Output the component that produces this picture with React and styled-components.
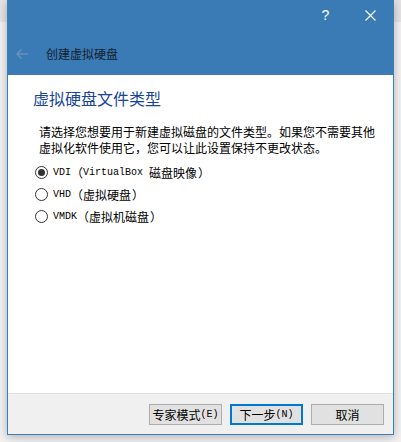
import React from "react";
import styled, { createGlobalStyle } from "styled-components";

const Global = createGlobalStyle`
  html, body { margin: 0; padding: 0; }
  body {
    background: #ececec;
    width: 401px;
    height: 442px;
    overflow: hidden;
    font-family: "Noto Sans CJK SC", "DejaVu Sans", sans-serif;
  }
`;

const Screen = styled.div`
  width: 401px;
  height: 442px;
  display: flex;
  background: linear-gradient(to bottom, #e4e4e4 0, #e4e4e4 22px, #f2f2f2 22px);
`;

const Window = styled.div`
  margin-left: 7px;
  width: 387px;
  height: 435px;
  box-sizing: border-box;
  border: 1px solid #3d7dbb;
  border-top: none;
  display: flex;
  flex-direction: column;
  background: #fff;
  box-shadow: 0 2px 9px rgba(0, 0, 0, 0.28);
`;

const TitleBar = styled.div`
  height: 75px;
  background: #3a7bb6;
  display: flex;
  flex-direction: column;
`;

const Controls = styled.div`
  height: 30px;
  display: flex;
  justify-content: flex-end;
`;

const CtrlButton = styled.div`
  width: 45px;
  height: 30px;
  display: flex;
  align-items: center;
  justify-content: center;
  color: #fff;
  font-family: "Liberation Sans", sans-serif;
  font-size: 14px;
`;

const TitleRow = styled.div`
  margin-top: 14px;
  height: 20px;
  display: flex;
  align-items: center;
  padding-left: 7px;
`;

const Title = styled.div`
  margin-left: 17px;
  font-size: 12px;
  line-height: 20px;
  color: #15202c;
`;

const Content = styled.div`
  height: 318px;
  box-sizing: border-box;
  padding: 13px 0 0 25px;
  display: flex;
  flex-direction: column;
`;

const Heading = styled.div`
  font-size: 16px;
  line-height: 20px;
  color: #17459a;
`;

const Description = styled.div`
  margin-top: 16px;
  padding-left: 6px;
  width: 340px;
  font-size: 12px;
  line-height: 16px;
  color: #000;
`;

const Options = styled.div`
  margin-top: 9px;
  padding-left: 2px;
  display: flex;
  flex-direction: column;
  gap: 8px;
`;

const Option = styled.label`
  display: flex;
  align-items: center;
  height: 14px;
  font-size: 12px;
  color: #000;
  white-space: pre;
`;

const Radio = styled.span`
  width: 13px;
  height: 13px;
  box-sizing: border-box;
  border-radius: 50%;
  border: 1px solid #333;
  background: #fff;
  margin-right: 5px;
  display: flex;
  align-items: center;
  justify-content: center;
  &::after {
    content: "";
    width: 7px;
    height: 7px;
    border-radius: 50%;
    background: ${(p) => (p.$checked ? "#333" : "transparent")};
  }
`;

const Mono = styled.span`
  font-family: "Liberation Mono", monospace;
  font-size: 10px;
`;

const Paren = styled.span`
  display: inline-block;
  width: 12px;
  overflow: hidden;
  text-align: ${(p) => (p.$close ? "left" : "right")};
  padding: ${(p) => (p.$close ? "0 0 0 1px" : "0 1px 0 0")};
  box-sizing: border-box;
`;

const Footer = styled.div`
  height: 40px;
  border-top: 1px solid #dfdfdf;
  background: #f0f0f0;
  display: flex;
  align-items: center;
  justify-content: flex-end;
  gap: 8px;
  padding-right: 9px;
`;

const Button = styled.div`
  width: 73px;
  height: 21px;
  box-sizing: border-box;
  border: ${(p) => (p.$default ? "2px solid #0078d7" : "1px solid #adadad")};
  background: #e1e1e1;
  display: flex;
  align-items: center;
  justify-content: center;
  font-size: 12px;
  color: #000;
  white-space: pre;
`;

const BackArrow = () => (
  <svg width="14" height="12" viewBox="0 0 14 12">
    <path d="M13 6H2M6.5 1.5L2 6l4.5 4.5" fill="none" stroke="#6a8fb9" strokeWidth="1.6" />
  </svg>
);

const CloseIcon = () => (
  <svg width="11" height="11" viewBox="0 0 11 11">
    <path d="M0.5 0.5l10 10M10.5 0.5l-10 10" stroke="#fff" strokeWidth="1.1" />
  </svg>
);

const Open = () => <Paren>（</Paren>;
const Close = () => <Paren $close>）</Paren>;

export default function App() {
  return (
    <Screen>
      <Global />
      <Window>
        <TitleBar>
          <Controls>
            <CtrlButton>?</CtrlButton>
            <CtrlButton>
              <CloseIcon />
            </CtrlButton>
          </Controls>
          <TitleRow>
            <BackArrow />
            <Title>创建虚拟硬盘</Title>
          </TitleRow>
        </TitleBar>
        <Content>
          <Heading>虚拟硬盘文件类型</Heading>
          <Description>
            请选择您想要用于新建虚拟磁盘的文件类型。如果您不需要其他虚拟化软件使用它，您可以让此设置保持不更改状态。
          </Description>
          <Options>
            <Option>
              <Radio $checked />
              <Mono>VDI</Mono>
              <Open />
              <Mono>VirtualBox </Mono>磁盘映像
              <Close />
            </Option>
            <Option>
              <Radio />
              <Mono>VHD</Mono>
              <Open />
              虚拟硬盘
              <Close />
            </Option>
            <Option>
              <Radio />
              <Mono>VMDK</Mono>
              <Open />
              虚拟机磁盘
              <Close />
            </Option>
          </Options>
        </Content>
        <Footer>
          <Button>
            专家模式<Mono>(E)</Mono>
          </Button>
          <Button $default>
            下一步<Mono>(N)</Mono>
          </Button>
          <Button>取消</Button>
        </Footer>
      </Window>
    </Screen>
  );
}
